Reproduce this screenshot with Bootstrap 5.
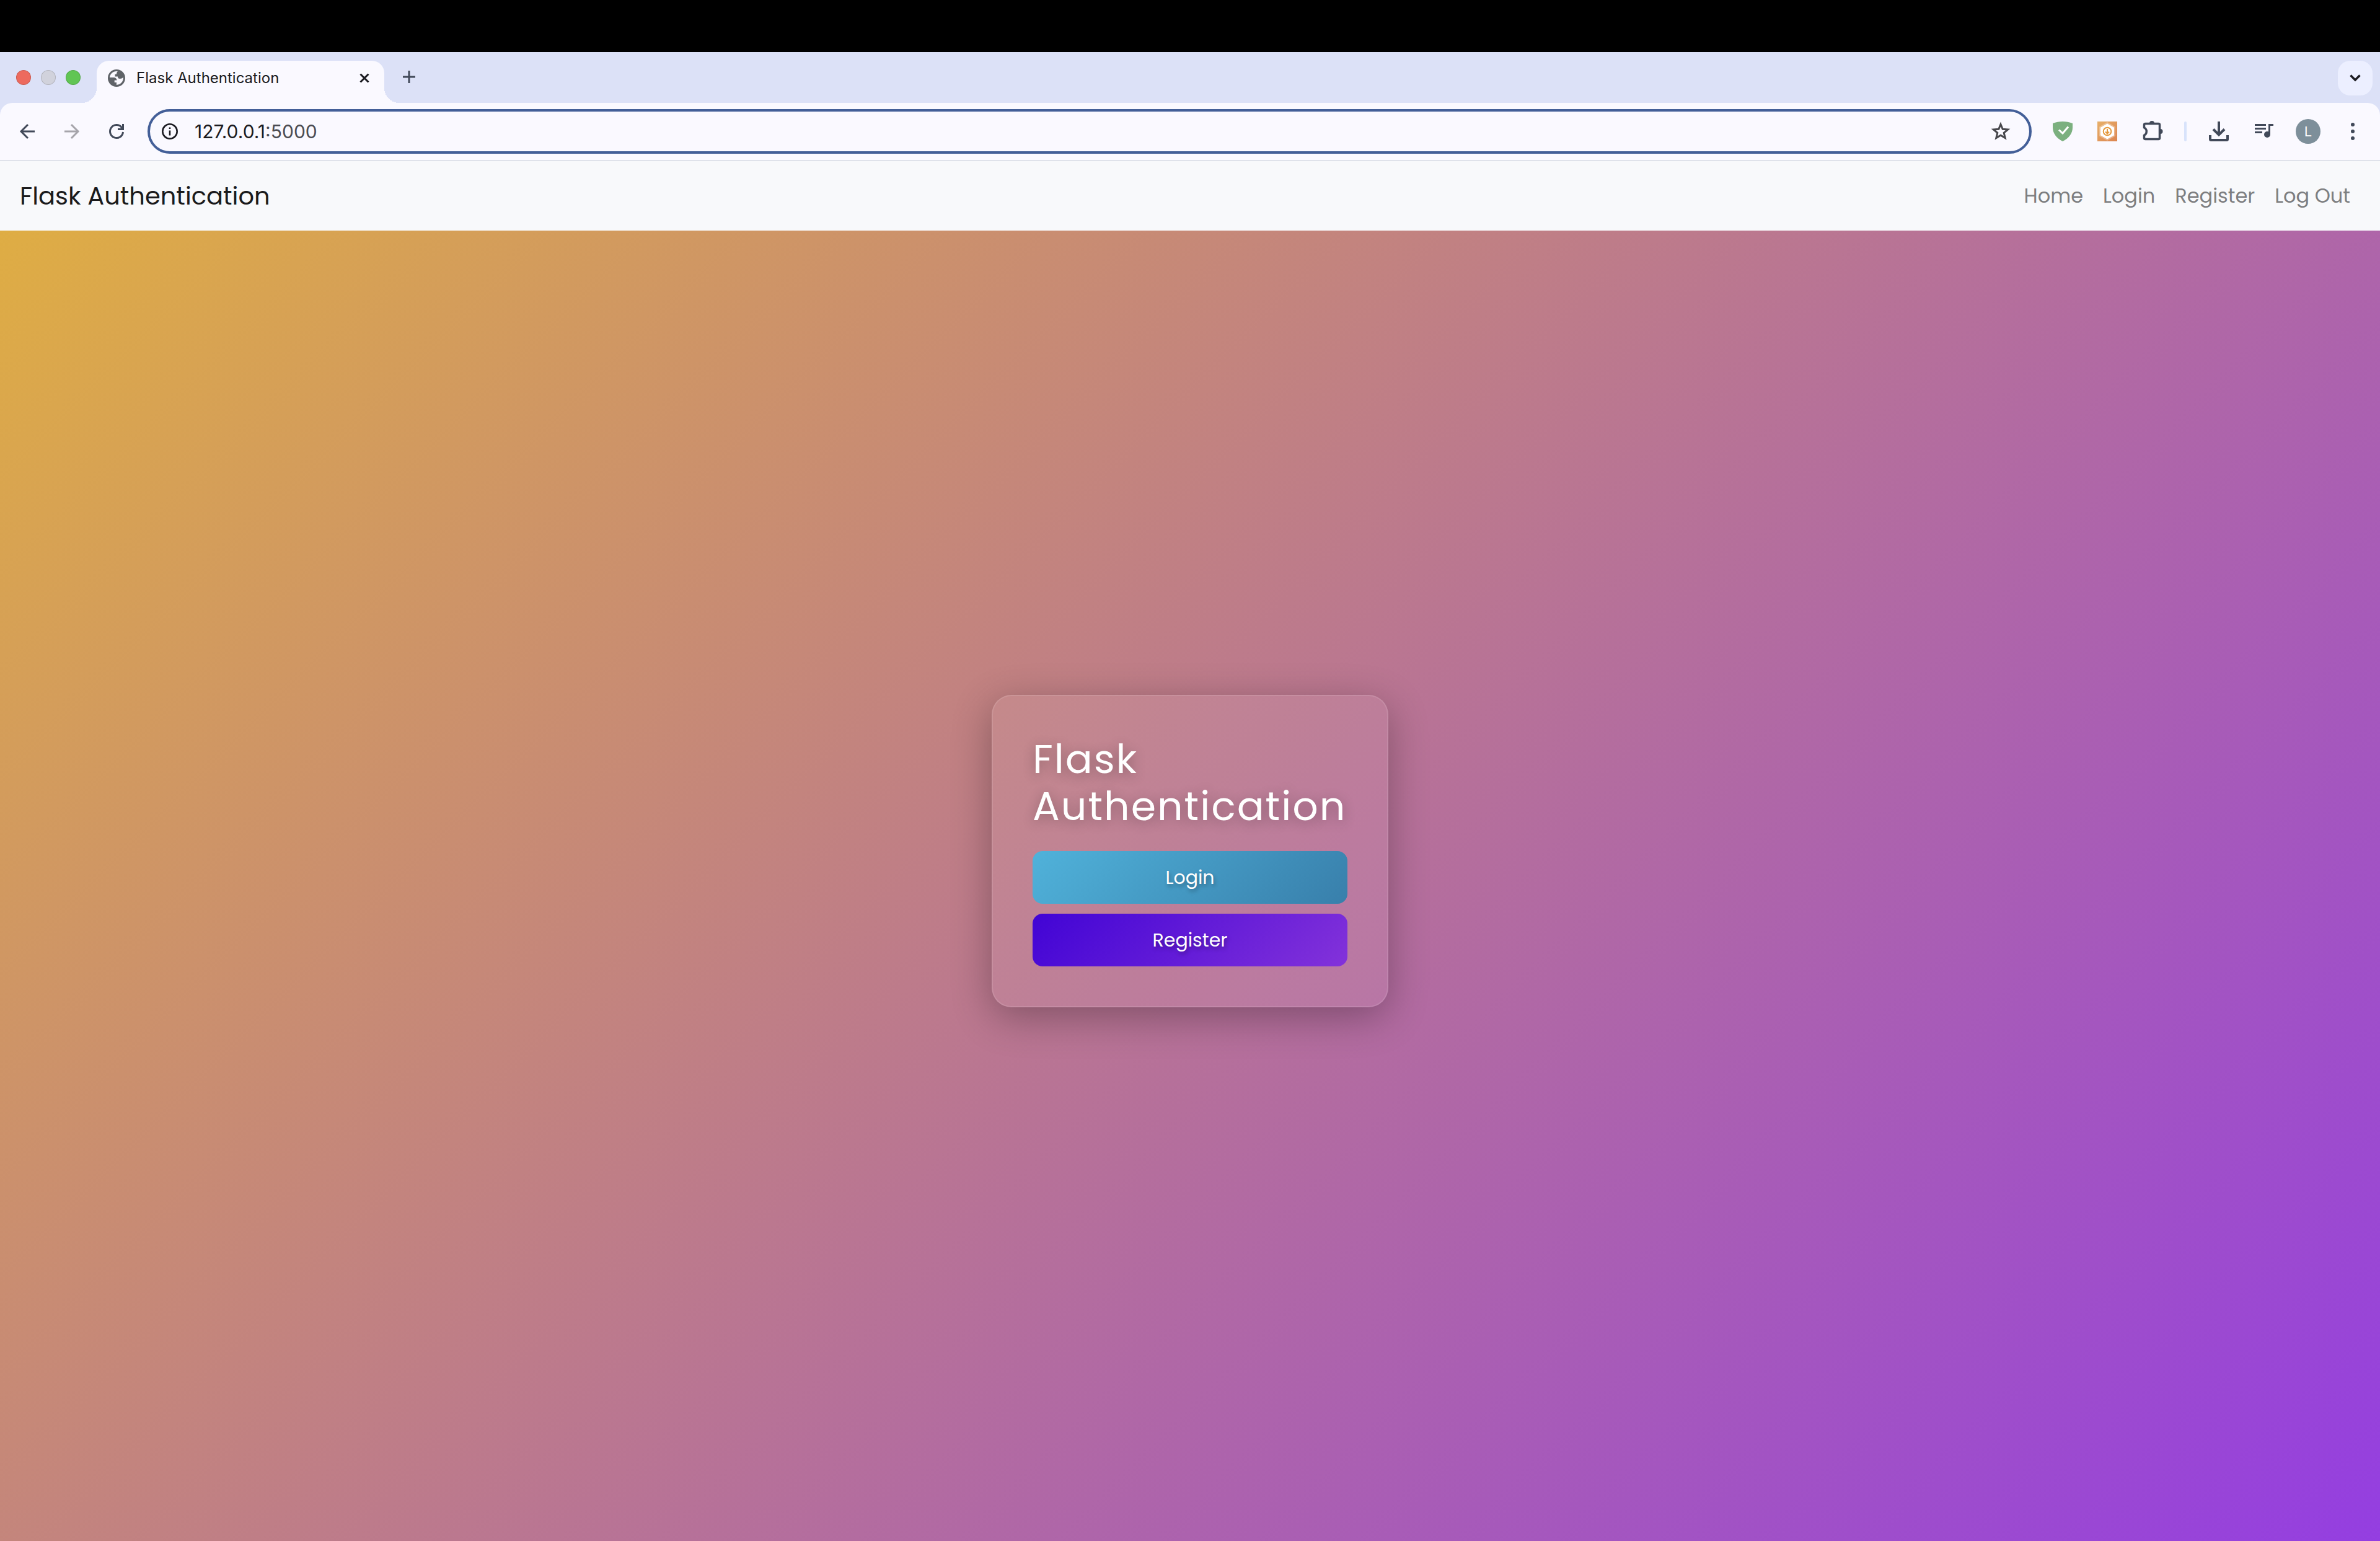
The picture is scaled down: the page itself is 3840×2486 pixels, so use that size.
<!DOCTYPE html>
<html lang="en">
<head>
<meta charset="utf-8">
<meta name="viewport" content="width=device-width, initial-scale=1">
<title>Flask Authentication</title>
<link href="https://cdn.jsdelivr.net/npm/bootstrap@5.3.0/dist/css/bootstrap.min.css" rel="stylesheet">
<style>
  :root { font-size: 32px; --chrome-ink: #414959; --chrome-surface: #faf9ff; --chrome-strip: #dce1f7; }
  body { font-family: Poppins, Inter, "Open Sans", sans-serif; background: var(--chrome-surface); }
  svg { display: block; flex: none; }

  /* Browser window */
  .screen-bezel { height: 84px; background: #000; }
  .tab-strip { height: 82px; background: var(--chrome-strip); font-family: Inter, sans-serif; padding: 14px 12px 0 26px; }
  .traffic { gap: 16px; height: 54px; }
  .light { width: 24px; height: 24px; border-radius: 50%; border: 1px solid rgba(0,0,0,.14); }
  .light-close { background: #ed6a5e; }
  .light-min { background: #d1d2dc; }
  .light-max { background: #61c554; }
  .browser-tab { position: relative; width: 464px; height: 68px; margin-left: 26px; padding: 0 24px 12px 18px; background: var(--chrome-surface); border-radius: 20px 20px 0 0; font-size: 24px; line-height: 32px; color: #1b1b21; }
  .browser-tab::before, .browser-tab::after { content: ""; position: absolute; bottom: 0; width: 24px; height: 24px; }
  .browser-tab::before { right: 100%; background: radial-gradient(circle at 0 0, transparent 24px, var(--chrome-surface) 24px); }
  .browser-tab::after { left: 100%; background: radial-gradient(circle at 100% 0, transparent 24px, var(--chrome-surface) 24px); }
  .tab-title { margin-left: 18px; }
  .plain-btn { border: 0; background: none; padding: 0; color: var(--chrome-ink); }
  .new-tab { margin: 16px 0 0 30px; }
  .tab-search { width: 56px; height: 56px; border-radius: 20px; background: #ecefff; color: #1b1b21; }
  .toolbar-wrap { background: var(--chrome-strip); }
  .toolbar { height: 94px; padding: 10px 28px; background: var(--chrome-surface); border-bottom: 2px solid #dfe2ea; border-radius: 20px 20px 0 0; font-family: Inter, sans-serif; }
  .nav-buttons { gap: 40px; margin-right: 34px; }
  .omnibox { height: 72px; padding: 0 30px 0 18px; border: 4px solid #435f98; border-radius: 36px; }
  .omnibox-field { margin-left: 26px; font-size: 30px; line-height: 40px; color: #1b1b21; }
  .omnibox-field span { color: #4b4c52; }
  .toolbar-end { margin-left: 34px; }
  .ext-icons { gap: 40px; }
  .bar-rule { width: 4px; height: 32px; border-radius: 2px; background: #d8e3fb; margin: 0 36px 0 32px; }
  .media-btn { margin-left: 38px; }
  .avatar { width: 40px; height: 40px; margin: 0 36px; border-radius: 50%; background: #7d8f9a; color: #fff; font-size: 22px; line-height: 40px; }

  /* Site */
  .site { background: linear-gradient(135deg, #e0af41, #943ee1); }
  .site-nav { min-height: 112px; padding: 0 32px; background: #f8f9fb; }
  .site-nav .navbar-brand { font-size: 40px; line-height: 60px; padding: 0; color: #1a1a1b; }
  .site-nav .nav-link { font-size: 32px; line-height: 48px; padding: 16px; color: #7d7e80; }
  .hero { padding-bottom: 112px; }
  .glass { width: 640px; padding: 64px; border: 2px solid rgba(255,255,255,.1); border-radius: 32px; background: rgba(255,255,255,.07); box-shadow: 0 16px 64px rgba(0,0,0,.3); }
  .glass h1 { margin: 0 0 34px; font-size: 65px; line-height: 76px; font-weight: 400; letter-spacing: 2px; color: #fff; text-shadow: 0 4px 20px rgba(0,0,0,.3); }
  .glass .btn { height: 85px; padding: 0; border: 0; border-radius: 16px; font-size: 30px; line-height: 85px; font-weight: 400; color: #fff; text-shadow: 2px 4px 6px rgba(0,0,0,.3); }
  .btn-login { background: linear-gradient(135deg, #50b2da, #387fab); }
  .btn-register { background: linear-gradient(135deg, #4104d5, #8332da); }
</style>
</head>
<body class="d-flex flex-column min-vh-100">
  <div class="screen-bezel"></div>
  <header>
    <div class="tab-strip d-flex align-items-start">
      <div class="traffic d-flex align-items-center"><span class="light light-close"></span><span class="light light-min"></span><span class="light light-max"></span></div>
      <div class="browser-tab d-flex align-items-center">
        <svg width="28" height="28" viewBox="0 0 28 28"><circle cx="14" cy="14" r="14" fill="#5f6368"/><path d="M16 3.200C9 2 3.300 7 3 13h6.500c3 0 5 2.200 5 4.500h-3.800v3.500H14v3.900c6.400-.2 11.500-5.200 10.800-12.400-1.400 1.800-3.200 2.500-5.300 2.500-2.500 0-3.500-1-3.500-3.500h-4.500V7.800H14c0-2 .5-3.600 2-4.600z" fill="#faf9ff"/></svg>
        <span class="tab-title">Flask Authentication</span>
        <button class="plain-btn ms-auto" aria-label="Close tab"><svg width="16" height="16" viewBox="0 0 16 16" stroke="#1b1b21" stroke-width="3"><path d="M1.500 1.500l13 13M14.500 1.500l-13 13"/></svg></button>
      </div>
      <button class="plain-btn new-tab" aria-label="New tab"><svg width="20" height="20" viewBox="0 0 20 20" stroke="currentColor" stroke-width="3"><path d="M10 0v20M0 10h20"/></svg></button>
      <button class="plain-btn tab-search ms-auto d-flex align-items-center justify-content-center" aria-label="Search tabs"><svg width="18" height="12" viewBox="0 0 18 12" fill="none" stroke="currentColor" stroke-width="3.500"><path d="M1.500 1.500L9 9l7.500-7.500"/></svg></button>
    </div>
    <div class="toolbar-wrap">
      <div class="toolbar d-flex align-items-center">
        <div class="nav-buttons d-flex">
          <button class="plain-btn" aria-label="Back"><svg width="32" height="32" viewBox="0 0 32 32" fill="none" stroke="currentColor" stroke-width="3"><path d="M28 16H6M17 5L6 16l11 11"/></svg></button>
          <button class="plain-btn" aria-label="Forward"><svg width="32" height="32" viewBox="0 0 32 32" fill="none" stroke="#a6a5ab" stroke-width="3"><path d="M4 16h22M15 5l11 11-11 11"/></svg></button>
          <button class="plain-btn" aria-label="Reload"><svg width="32" height="32" viewBox="0 0 32 32" fill="none" stroke="currentColor" stroke-width="3"><path d="M26.500 17A10.500 10.500 0 1 1 24 9.200l2 2.500M26.500 4v8.500H18"/></svg></button>
        </div>
        <div class="omnibox flex-grow-1 d-flex align-items-center">
          <svg width="28" height="28" viewBox="0 0 28 28" fill="none" stroke="#1b1b21" stroke-width="2.600"><circle cx="14" cy="14" r="11.700"/><path d="M14 12.500v8M14 7.500v2.600"/></svg>
          <div class="omnibox-field">127.0.0.1<span>:5000</span></div>
          <button class="plain-btn ms-auto" aria-label="Bookmark"><svg width="32" height="32" viewBox="0 0 32 32" fill="none" stroke="#47474c" stroke-width="3"><path d="M16 4.500l3.200 7.800 8.400.7-6.400 5.400 2 8.200-7.200-4.400-7.200 4.400 2-8.200L4.400 13l8.400-.7z"/></svg></button>
        </div>
        <div class="toolbar-end d-flex align-items-center">
          <div class="ext-icons d-flex align-items-center">
            <svg width="32" height="32" viewBox="0 0 32 32"><path d="M0 3C10-1 22-1 32 3v7c0 9-6 17-16 22C6 27 0 19 0 10z" fill="#7bb07f"/><path d="M10 13.500l6 5.500L25 8.500" fill="none" stroke="#fff" stroke-width="3"/></svg>
            <svg width="32" height="32" viewBox="0 0 32 32"><defs><linearGradient id="amber" x2="1" y2="1"><stop stop-color="#e7b06a"/><stop offset="1" stop-color="#dc8450"/></linearGradient></defs><path fill="url(#amber)" d="M0 0h32v32H0z"/><path d="M16 1l13 7.500v15L16 31 3 23.500v-15z" fill="#fff" opacity=".3"/><path d="M16 3.500l11 6.200v12.600l-11 6.200-11-6.200V9.700z" fill="#fff"/><g fill="none" stroke="#e59a3f" stroke-width="2"><circle cx="16" cy="16" r="6.300"/><path d="M16 12v7M13 16.500l3 3 3-3"/></g></svg>
            <svg width="36" height="36" viewBox="0 0 36 36" fill="none" stroke="var(--chrome-ink)" stroke-width="3.500" stroke-linejoin="round"><path d="M5.500 5.500h21q2 0 2 2v21q0 2-2 2h-21q-2 0-2-2V24c5-2 5-10 0-12V7.500q0-2 2-2z"/><path d="M12 5a4 4 0 0 1 8 0zM29.500 14a4 4 0 0 1 0 8z" fill="var(--chrome-ink)" stroke="none"/></svg>
          </div>
          <span class="bar-rule"></span>
          <button class="plain-btn" aria-label="Downloads"><svg width="32" height="32" viewBox="0 0 32 32" fill="none" stroke="currentColor" stroke-width="4"><path d="M16 0v21M7 12.500l9 9 9-9M2 22v6.500q0 1.500 1.500 1.500h25q1.500 0 1.500-1.500V22"/></svg></button>
          <button class="plain-btn media-btn" aria-label="Media"><svg width="34" height="32" viewBox="0 0 34 32" fill="none" stroke="currentColor" stroke-width="3"><path d="M4 5.500h18M4 11.500h18M4 17.500h12M27.500 21V5.500H34"/><circle cx="24" cy="21" r="5" fill="currentColor" stroke="none"/></svg></button>
          <button class="plain-btn avatar text-center" aria-label="Profile">L</button>
          <button class="plain-btn" aria-label="Menu"><svg width="32" height="32" viewBox="0 0 32 32" fill="currentColor"><circle cx="16" cy="5" r="3"/><circle cx="16" cy="16" r="3"/><circle cx="16" cy="27" r="3"/></svg></button>
        </div>
      </div>
    </div>
  </header>
  <div class="site flex-grow-1 d-flex flex-column">
    <nav class="site-nav navbar navbar-expand">
      <a class="navbar-brand" href="#">Flask Authentication</a>
      <div class="navbar-nav ms-auto">
        <a class="nav-link" href="#">Home</a>
        <a class="nav-link" href="#">Login</a>
        <a class="nav-link" href="#">Register</a>
        <a class="nav-link" href="#">Log Out</a>
      </div>
    </nav>
    <main class="hero flex-grow-1 d-flex align-items-center justify-content-center">
      <section class="glass">
        <h1>Flask Authentication</h1>
        <div class="d-grid gap-2">
          <button class="btn btn-login">Login</button>
          <button class="btn btn-register">Register</button>
        </div>
      </section>
    </main>
  </div>
</body>
</html>
